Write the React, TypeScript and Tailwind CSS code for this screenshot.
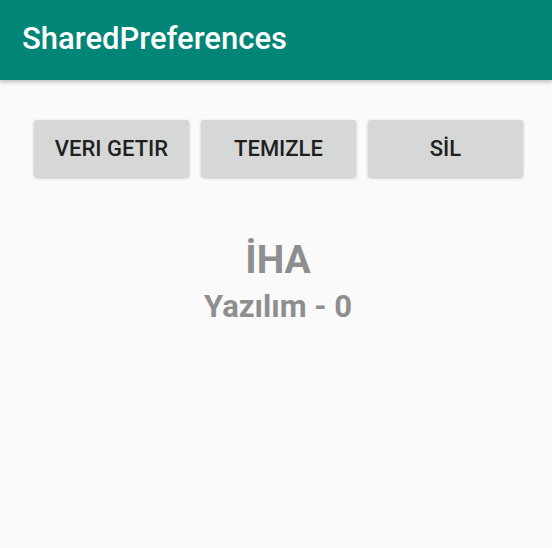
export default function App() {
  return (
    <div className="w-[552px] h-[548px] bg-[#fafafa] flex flex-col" style={{ fontFamily: "Roboto, sans-serif" }}>
      <div className="h-[80px] bg-[#008577] flex items-center px-[22px] pb-[4px] shadow-[0_2px_4px_rgba(0,0,0,0.25)] z-10">
        <span className="text-white text-[31px] font-medium leading-none">SharedPreferences</span>
      </div>
      <div className="flex gap-[12px] pl-[34px] pt-[40px]">
        {["VERI GETIR", "TEMIZLE", "SİL"].map((t) => (
          <button
            key={t}
            className="w-[155px] h-[57px] bg-[#d6d7d7] rounded-[3px] shadow-[0_1px_3px_rgba(0,0,0,0.25)] text-[22px] font-medium text-[#1f1f1f]"
          >
            {t}
          </button>
        ))}
      </div>
      <div className="flex flex-col items-center mt-[58px] pl-[4px] text-[#8e8e8e] font-bold">
        <span className="text-[39px] leading-[50px]">İHA</span>
        <span className="text-[31px] leading-[38px] mt-[3px]">Yazılım - 0</span>
      </div>
    </div>
  );
}
